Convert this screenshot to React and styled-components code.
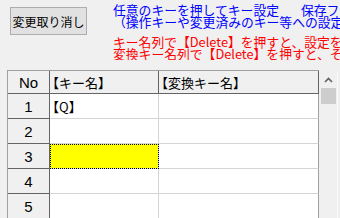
import React from "react";
import styled, { createGlobalStyle } from "styled-components";

const GlobalStyle = createGlobalStyle`
  html, body { margin: 0; padding: 0; background: #f0f0f0; }
  body {
    width: 340px; height: 218px; overflow: hidden;
    font-family: "Noto Sans CJK JP", sans-serif;
  }
`;

const Page = styled.div`
  width: 340px;
  height: 218px;
  overflow: hidden;
  background: #f0f0f0;
`;

const Top = styled.div`
  display: flex;
  align-items: flex-start;
  height: 70px;
`;

const UndoButton = styled.button`
  margin: 7px 0 0 10px;
  width: 77px;
  height: 28px;
  box-sizing: border-box;
  flex: none;
  border: 1px solid #adadad;
  background: #e1e1e1;
  color: #000;
  padding: 0;
  font-family: "Noto Sans CJK JP", sans-serif;
  font-size: 12px;
`;

const Notes = styled.div`
  margin: 4px 0 0 26px;
  flex: 1;
  min-width: 0;
  overflow: hidden;
  white-space: nowrap;
  font-size: 12.8px;
  line-height: 12px;
`;

const NoteLine = styled.div`
  height: 12px;
  color: ${(p) => (p.$tone === "red" ? "#ff0000" : "#0000ff")};
  margin-top: ${(p) => (p.$gap ? "8px" : "0")};
`;

const Spacer = styled.span`
  margin-left: 22px;
`;

const GridArea = styled.div`
  display: flex;
  margin-left: 7px;
  height: 148px;
`;

const Table = styled.div`
  display: grid;
  grid-template-columns: 42px 109px 160px;
  grid-template-rows: 23px;
  grid-auto-rows: 25px;
  border-left: 1px solid #a0a0a0;
  border-top: 1px solid #a0a0a0;
  align-content: start;
`;

const HeaderCell = styled.div`
  box-sizing: border-box;
  background: #f0f0f0;
  border-right: 1px solid #646464;
  border-bottom: 1px solid #646464;
  display: flex;
  align-items: center;
  justify-content: ${(p) => (p.$center ? "center" : "flex-start")};
  font-family: ${(p) =>
    p.$latin
      ? '"Liberation Sans", sans-serif'
      : '"Noto Sans CJK JP", sans-serif'};
  font-size: ${(p) => (p.$latin ? "15px" : "13px")};
  color: #000;
  white-space: nowrap;
`;

const RowHead = styled.div`
  box-sizing: border-box;
  background: #f0f0f0;
  border-right: 1px solid #646464;
  border-bottom: 1px solid #646464;
  display: flex;
  align-items: center;
  justify-content: center;
  font-family: "Liberation Sans", sans-serif;
  font-size: 15px;
  color: #000;
`;

const DataCell = styled.div`
  box-sizing: border-box;
  background: ${(p) => (p.$selected ? "#ffff00" : "#ffffff")};
  border-right: 1px solid ${(p) => (p.$last ? "#a0a0a0" : "#d4d4d4")};
  border-bottom: 1px solid #d4d4d4;
  outline: ${(p) => (p.$selected ? "1px dotted #000" : "none")};
  outline-offset: -1px;
  display: flex;
  align-items: center;
  font-size: 13px;
  color: #000;
  white-space: nowrap;
`;

const Label = styled.span`
  margin-left: -4px;
`;

const Scroll = styled.div`
  width: 17px;
  margin: 1px 0 0 1px;
  background: #f0f0f0;
  border-right: 1px solid #fafafa;
  display: flex;
  flex-direction: column;
  align-items: center;
`;

const ArrowBtn = styled.div`
  width: 17px;
  height: 17px;
  display: flex;
  align-items: center;
  justify-content: center;
`;

const Thumb = styled.div`
  width: 15px;
  height: 16px;
  background: #cdcdcd;
`;

const rows = [1, 2, 3, 4, 5];

export default function App() {
  return (
    <Page>
      <GlobalStyle />
      <Top>
        <UndoButton>変更取り消し</UndoButton>
        <Notes>
          <NoteLine>
            任意のキーを押してキー設定<Spacer />保存ファイル
          </NoteLine>
          <NoteLine>（操作キーや変更済みのキー等への設定はできません）</NoteLine>
          <NoteLine $tone="red" $gap>
            キー名列で【Delete】を押すと、設定を削除します。
          </NoteLine>
          <NoteLine $tone="red">
            変換キー名列で【Delete】を押すと、その設定を削除します。
          </NoteLine>
        </Notes>
      </Top>
      <GridArea>
        <Table>
          <HeaderCell $center $latin>No</HeaderCell>
          <HeaderCell><Label>【キー名】</Label></HeaderCell>
          <HeaderCell><Label>【変換キー名】</Label></HeaderCell>
          {rows.map((n) => (
            <React.Fragment key={n}>
              <RowHead>{n}</RowHead>
              <DataCell $selected={n === 3}>
                {n === 1 ? <Label>【Q】</Label> : null}
              </DataCell>
              <DataCell $last />
            </React.Fragment>
          ))}
        </Table>
        <Scroll>
          <ArrowBtn>
            <svg width="9" height="6" viewBox="0 0 9 6">
              <polyline
                points="1,5 4.5,1.5 8,5"
                fill="none"
                stroke="#606060"
                strokeWidth="1.6"
              />
            </svg>
          </ArrowBtn>
          <Thumb />
        </Scroll>
      </GridArea>
    </Page>
  );
}
